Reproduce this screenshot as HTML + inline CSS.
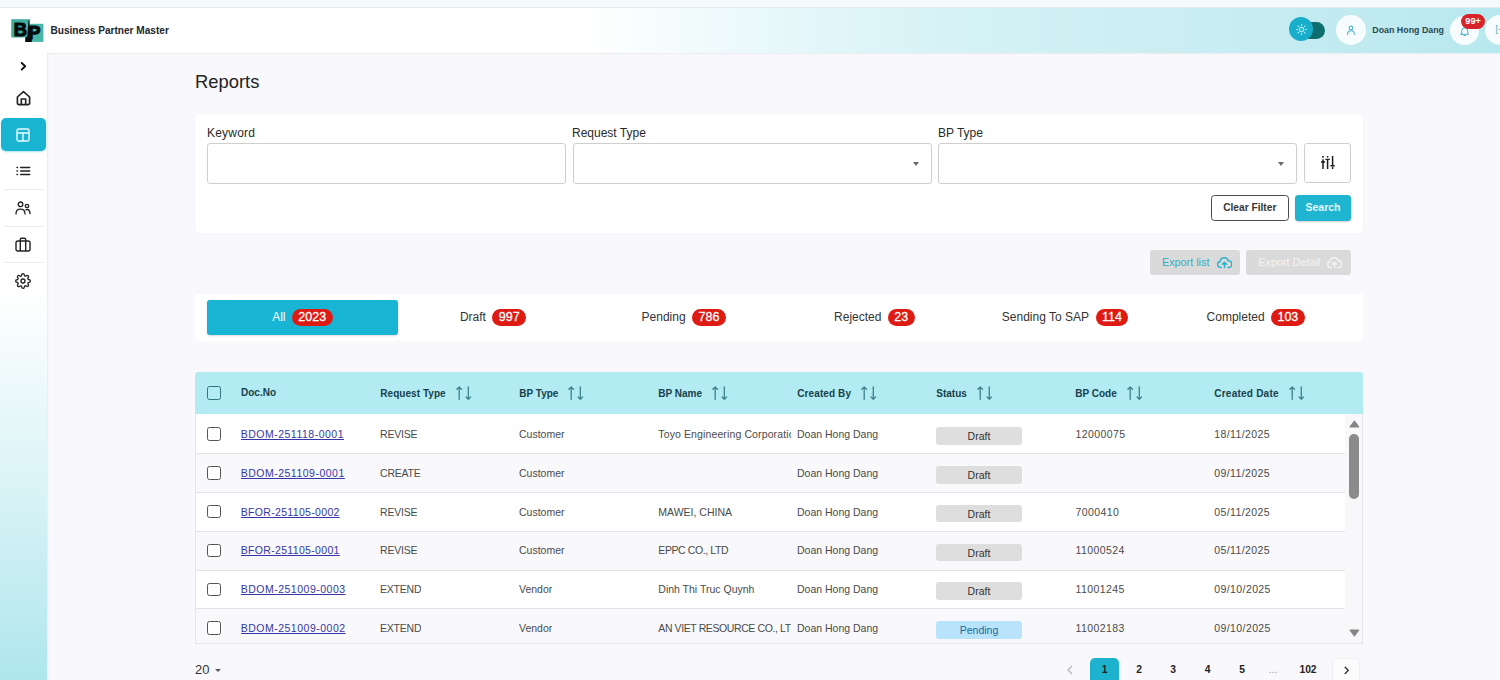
<!DOCTYPE html>
<html lang="en">
<head>
<meta charset="utf-8">
<title>Business Partner Master - Reports</title>
<style>
*{box-sizing:border-box;margin:0;padding:0}
html,body{width:1500px;height:680px;overflow:hidden}
body{font-family:"Liberation Sans",sans-serif;color:#2b2b2b;background:#f9f9fd;position:relative;font-size:11px}
.abs{position:absolute}
#topstrip{left:0;top:0;width:1500px;height:8px;background:#f4f9fa;border-bottom:1px solid #e4eaec}
#header{left:0;top:8px;width:1500px;height:45px;background:linear-gradient(90deg,#ffffff 0%,#ffffff 39%,#f2fbfc 46%,#e2f6f9 55%,#d6f2f6 63%,#c5ecf1 85%,#b8e8ef 100%)}
#sidebar{left:0;top:53px;width:47px;height:627px;background:linear-gradient(180deg,#ffffff 0%,#ffffff 38%,#d9f3f6 70%,#aee6ed 100%)}
#main{left:47px;top:53px;width:1453px;height:627px;background:#f9f9fd;box-shadow:inset 1px 1px 2px rgba(0,0,0,.06)}
.logo{left:11px;top:19px;width:33px;height:23px}
.brand{left:50.5px;top:25px;font-size:10.1px;font-weight:bold;color:#23262d;letter-spacing:0}
.title{left:195px;top:70.500px;font-size:18.400px;color:#222}
.card{background:#fff;border-radius:4px}
.lbl{font-size:12px;color:#2a2a2a}
.inp{background:#fff;border:1px solid #cfcfcf;border-radius:3px;height:41px}
.caret{width:0;height:0;border-left:3.500px solid transparent;border-right:3.500px solid transparent;border-top:4px solid #6a6a6a}
.btn{border-radius:3px;font-size:10.5px;text-align:center;height:25px;line-height:23px}
.tab{margin-top:1px;font-size:12px;color:#333;white-space:nowrap}
.badge{display:inline-block;background:#de1b13;color:#fff;-webkit-text-stroke:0.300px #fff;border-radius:9px;height:17.500px;line-height:17.500px;padding:0 6.400px;font-size:12.500px;margin-left:6.500px;vertical-align:middle;position:relative;top:-0.500px}
.th{font-size:10px;font-weight:bold;color:#17414c;white-space:nowrap;top:387px}
.th svg{vertical-align:middle;margin-left:10px;position:relative;top:-1.500px}
.rowc{left:195px;width:1150px;height:39px}
.cell{position:absolute;top:0;line-height:38px;height:38px;font-size:10.500px;color:#4a4a4a;white-space:nowrap;overflow:hidden}
.cell.lk{letter-spacing:0.500px}
.cell.up{letter-spacing:-0.200px}
.cell.num{letter-spacing:0.400px}
.cell a{color:#3636a6;text-decoration:underline}
.cb{position:absolute;left:12.300px;top:12.400px;width:13.700px;height:13.500px;border:1.500px solid #555;border-radius:2.500px;background:#fff}
.st{position:absolute;left:741px;top:12.200px;width:86px;height:17.700px;border-radius:3px;font-size:10.500px;text-align:center;line-height:18.500px;background:#dedede;color:#333}
.st.p{background:#b9e3fa;color:#1a6a9a}
.pg{font-size:10.300px;font-weight:bold;color:#333;top:664px;width:30px;text-align:center}
</style>
</head>
<body>
<div id="topstrip" class="abs"></div>
<div id="header" class="abs"></div>
<div id="sidebar" class="abs"></div>
<div id="main" class="abs"></div>

<!-- logo -->
<svg class="abs logo" viewBox="0 0 33 23">
  <rect x="0.2" y="0.2" width="18.3" height="18.3" fill="#3fae9f"/>
  <rect x="14.3" y="4.800" width="18.1" height="18.1" fill="#46b6a7"/>
  <polygon points="18.500,0.200 18.500,7 20.800,7 20.800,22.900 14.300,22.900 14.300,18.800 16.300,17 17.100,6 17.500,2" fill="#070d0c"/>
  <text x="2.800" y="17.200" font-family="Liberation Sans, sans-serif" font-weight="bold" font-size="18.300" fill="#070d0c" stroke="#070d0c" stroke-width="1.200" stroke-linejoin="round">B</text>
  <text x="17.200" y="19.700" font-family="Liberation Sans, sans-serif" font-weight="bold" font-size="18.300" fill="#070d0c" stroke="#070d0c" stroke-width="1.200" stroke-linejoin="round">P</text>
</svg>
<div class="abs brand">Business Partner Master</div>

<div class="abs title">Reports</div>

<!-- header right -->
<div class="abs" style="left:1296px;top:22px;width:29px;height:17px;border-radius:8.500px;background:#0f6d70"></div>
<div class="abs" style="left:1289px;top:17.300px;width:24px;height:24px;border-radius:12px;background:#18aeca"></div>
<svg class="abs" style="left:1294.500px;top:23.200px" width="13" height="13" viewBox="0 0 16 16" fill="none" stroke="#9fe9f3" stroke-width="1.400" stroke-linecap="round"><circle cx="8" cy="8" r="2.6"/><path d="M8 1.6v1.6M8 12.8v1.6M1.6 8h1.6M12.8 8h1.6M3.5 3.5l1.1 1.1M11.4 11.4l1.1 1.1M3.5 12.5l1.1-1.1M11.4 4.6l1.1-1.1"/></svg>
<div class="abs" style="left:1336px;top:15px;width:30px;height:30px;border-radius:15px;background:#f7fdfe"></div>
<svg class="abs" style="left:1346.300px;top:25px" width="10" height="10" viewBox="0 0 10 10" fill="none" stroke="#4fb3c3" stroke-width="1.100" stroke-linecap="round"><circle cx="5" cy="3" r="1.900"/><path d="M1.600 9.400c0-2.400 1.500-3.700 3.400-3.700s3.400 1.300 3.400 3.700"/></svg>
<div class="abs" style="left:1372.300px;top:24.500px;font-size:8.850px;font-weight:bold;color:#2b4850;white-space:nowrap">Doan Hong Dang</div>
<div class="abs" style="left:1450px;top:16px;width:29px;height:29px;border-radius:14.500px;background:#f7fdfe"></div>
<svg class="abs" style="left:1460px;top:25.500px" width="9.500" height="10.300" viewBox="0 0 12 13" fill="none" stroke="#2aa7bd" stroke-width="1.1" stroke-linecap="round" stroke-linejoin="round"><path d="M2.2 9.5V6a3.8 3.8 0 0 1 7.6 0v3.5l1 1H1.2z"/><path d="M5 12h2"/></svg>
<div class="abs" style="left:1461px;top:13.800px;width:24.300px;height:15px;border-radius:7.500px;background:#d8232a;color:#fff;font-size:9.300px;font-weight:bold;line-height:15px;text-align:center">99+</div>
<div class="abs" style="left:1485.300px;top:15.300px;width:29.500px;height:29.500px;border-radius:15px;background:#f7fdfe"></div>
<div class="abs" style="left:1495.500px;top:24px;font-size:9px;color:#4aa8b8">[-</div>


<!-- sidebar -->
<svg class="abs" style="left:18px;top:61px" width="10" height="10" viewBox="0 0 10 10" fill="none" stroke="#111" stroke-width="1.900" stroke-linecap="round" stroke-linejoin="round"><path d="M3.700 2L7.200 5.300 3.700 8.600"/></svg>
<svg class="abs" style="left:16px;top:90px" width="15" height="16" viewBox="0 0 15 16" fill="none" stroke="#222" stroke-width="1.650" stroke-linejoin="round"><path d="M1.400 7L7.500 1.700l6.100 5.300v6.100a1.500 1.500 0 0 1-1.500 1.500H2.900a1.500 1.500 0 0 1-1.500-1.500z"/><path d="M5.300 14.500V9h4.400v5.500"/></svg>
<div class="abs" style="left:1px;top:117.600px;width:45px;height:33.500px;border-radius:5px;background:#19b4d1;box-shadow:0 1px 2px rgba(25,180,209,.35)"></div>
<svg class="abs" style="left:16px;top:128px" width="14" height="14" viewBox="0 0 14 14" fill="none" stroke="#e9fbff" stroke-width="1.4" stroke-linejoin="round"><rect x="1" y="1" width="12" height="12" rx="1.6"/><path d="M1 5h12M7 5v8"/></svg>
<svg class="abs" style="left:15px;top:165px" width="16" height="12" viewBox="0 0 16 12" fill="none" stroke="#222" stroke-width="1.5" stroke-linecap="round"><path d="M5.700 2.400h9M5.700 6h9M5.700 9.600h9"/><path d="M2 2.400h.5M2 6h.5M2 9.600h.5"/></svg>
<div class="abs" style="left:4px;top:189px;width:39px;height:1px;background:#ebebed"></div>
<svg class="abs" style="left:15px;top:201px" width="16" height="14" viewBox="0 0 16 14" fill="none" stroke="#222" stroke-width="1.3" stroke-linecap="round"><circle cx="5.500" cy="3.300" r="2.300"/><circle cx="12" cy="5" r="1.700"/><path d="M1 13c0-3 2-4.800 4.500-4.800S10 10 10 13"/><path d="M10.800 8.800c.4-.2.800-.3 1.200-.3 1.800 0 3 1.600 3 4.200"/></svg>
<div class="abs" style="left:4px;top:226px;width:39px;height:1px;background:#ebebed"></div>
<svg class="abs" style="left:15px;top:237px" width="16" height="15" viewBox="0 0 16 15" fill="none" stroke="#222" stroke-width="1.4" stroke-linejoin="round"><rect x="1" y="4" width="14" height="10" rx="1.800"/><path d="M5.300 14V2.400a1.200 1.200 0 0 1 1.200-1.200h3a1.200 1.200 0 0 1 1.200 1.200V14"/></svg>
<div class="abs" style="left:4px;top:262px;width:39px;height:1px;background:#ebebed"></div>
<svg class="abs" style="left:15px;top:273px" width="16" height="16" viewBox="0 0 24 24" fill="none" stroke="#222" stroke-width="2" stroke-linecap="round" stroke-linejoin="round"><circle cx="12" cy="12" r="3"/><path d="M19.4 15a1.650 1.650 0 0 0 .33 1.820l.06.06a2 2 0 1 1-2.830 2.830l-.06-.06a1.650 1.650 0 0 0-1.820-.33 1.650 1.650 0 0 0-1 1.510V21a2 2 0 0 1-4 0v-.09A1.650 1.650 0 0 0 9 19.400a1.650 1.650 0 0 0-1.820.33l-.06.06a2 2 0 1 1-2.830-2.830l.06-.06a1.650 1.650 0 0 0 .33-1.820 1.650 1.650 0 0 0-1.510-1H3a2 2 0 0 1 0-4h.09A1.650 1.650 0 0 0 4.600 9a1.650 1.650 0 0 0-.33-1.820l-.06-.06a2 2 0 1 1 2.830-2.830l.06.06a1.650 1.650 0 0 0 1.820.33H9a1.650 1.650 0 0 0 1-1.510V3a2 2 0 0 1 4 0v.09a1.650 1.650 0 0 0 1 1.510 1.650 1.650 0 0 0 1.820-.33l.06-.06a2 2 0 1 1 2.830 2.830l-.06.06a1.650 1.650 0 0 0-.33 1.820V9a1.650 1.650 0 0 0 1.510 1H21a2 2 0 0 1 0 4h-.09a1.650 1.650 0 0 0-1.510 1z"/></svg>


<!-- filter card -->
<div class="abs card" style="left:195px;top:114px;width:1168px;height:119px;box-shadow:0 0 2px rgba(0,0,0,.06)"></div>
<div class="abs lbl" style="left:207px;top:126px;letter-spacing:0.200px">Keyword</div>
<div class="abs lbl" style="left:572px;top:126px">Request Type</div>
<div class="abs lbl" style="left:938px;top:126px">BP Type</div>
<div class="abs inp" style="left:207px;top:143px;width:359px"></div>
<div class="abs inp" style="left:573px;top:143px;width:359px"></div>
<div class="abs caret" style="left:912.500px;top:162.300px"></div>
<div class="abs inp" style="left:938px;top:143px;width:359px"></div>
<div class="abs caret" style="left:1277.800px;top:162.300px"></div>
<div class="abs inp" style="left:1304px;top:143px;width:47px;height:40px"></div>
<svg class="abs" style="left:1321px;top:156px" width="14" height="13" viewBox="0 0 14 13" fill="none" stroke="#1e1e1e" stroke-width="1.500"><path d="M2 0v1.800M2 3.300v9.700M6.600 0v1.600M6.600 3.300v9.700M11.600 0v9.500M11.600 10.800v2.200"/><path d="M0 6h4.100M4.400 3.400h4.400M9.400 9.700h4.400" stroke-width="1.400"/></svg>
<div class="abs btn" style="left:1211px;top:195.300px;width:77.500px;height:26px;line-height:24px;border:1px solid #4a4a4a;border-radius:3.500px;background:#fff;color:#363636;font-weight:bold;font-size:10.200px">Clear Filter</div>
<div class="abs btn" style="left:1295px;top:195.300px;width:56px;height:26px;background:#1fb5d1;color:#e6f8fb;font-weight:bold;line-height:25px;border-radius:3.500px;box-shadow:0 1px 2px rgba(0,0,0,.2)">Search</div>

<div class="abs btn" style="left:1150px;top:250.400px;width:90.400px;background:#dadada;color:#2ab0c8;text-align:left;padding-left:12px;line-height:25px;font-size:10.800px">Export list</div>
<svg class="abs" style="left:1217px;top:256px" width="15" height="13" viewBox="0 0 15 13" fill="none" stroke="#2ab0c8" stroke-width="1.500" stroke-linecap="round" stroke-linejoin="round"><path d="M4 11.500h-.5a3 3 0 0 1-.4-5.950A4.200 4.200 0 0 1 11.300 4.700 3.300 3.300 0 0 1 11.500 11.500H11"/><path d="M7.500 11.500V6.500M5.500 8.300l2-2 2 2"/></svg>
<div class="abs btn" style="left:1246.400px;top:250.400px;width:104.800px;background:#dadada;color:#f4f4f4;text-align:left;padding-left:12px;line-height:25px;font-size:10.800px">Export Detail</div>
<svg class="abs" style="left:1327px;top:256px" width="15" height="13" viewBox="0 0 15 13" fill="none" stroke="#f4f4f4" stroke-width="1.500" stroke-linecap="round" stroke-linejoin="round"><path d="M4 11.500h-.5a3 3 0 0 1-.4-5.950A4.200 4.200 0 0 1 11.300 4.700 3.300 3.300 0 0 1 11.500 11.500H11"/><path d="M7.500 11.500V6.500M5.500 8.300l2-2 2 2"/></svg>

<!-- tabs -->
<div class="abs card" style="left:195px;top:294px;width:1168px;height:47px;border-radius:2px"></div>
<div class="abs" style="left:207px;top:300px;width:191px;height:35px;border-radius:3px;background:#17b5d3;box-shadow:0 1px 2px rgba(0,0,0,.15)"></div>
<div class="abs tab" style="left:207.0px;top:308px;width:190.7px;text-align:center;color:#fff">All<span class="badge">2023</span></div>
<div class="abs tab" style="left:397.7px;top:308px;width:190.7px;text-align:center;color:#333">Draft<span class="badge">997</span></div>
<div class="abs tab" style="left:588.3px;top:308px;width:190.7px;text-align:center;color:#333">Pending<span class="badge">786</span></div>
<div class="abs tab" style="left:779.0px;top:308px;width:190.7px;text-align:center;color:#333">Rejected<span class="badge">23</span></div>
<div class="abs tab" style="left:969.7px;top:308px;width:190.7px;text-align:center;color:#333">Sending To SAP<span class="badge">114</span></div>
<div class="abs tab" style="left:1160.3px;top:308px;width:190.7px;text-align:center;color:#333">Completed<span class="badge">103</span></div>
<!-- table -->
<div class="abs" style="left:195px;top:372.400px;width:1168px;height:41.600px;background:#b2ebf2;border-radius:3px 3px 0 0"></div>
<div class="abs" style="left:195px;top:414px;width:1168px;height:230px;background:#fff;border:1px solid #e4e4e9;border-top:none"></div>
<div class="abs" style="left:207.300px;top:386.300px;width:13.600px;height:13.600px;border:1.600px solid #2f7381;border-radius:2.500px"></div>
<div class="abs th" style="left:241px;letter-spacing:0px">Doc.No</div>
<div class="abs th" style="left:380.3px;letter-spacing:0.05px">Request Type<svg width="16" height="14" viewBox="0 0 16 14" fill="none" stroke="#3d7f8c" stroke-width="1.300" stroke-linecap="round" stroke-linejoin="round"><path d="M3.200 13.300V1M0.900 3.200l2.300-2.300 2.300 2.300"/><path d="M12.300 0.800v12.300M10 10.900l2.300 2.300 2.300-2.300"/></svg></div>
<div class="abs th" style="left:519.3px;letter-spacing:0px">BP Type<svg width="16" height="14" viewBox="0 0 16 14" fill="none" stroke="#3d7f8c" stroke-width="1.300" stroke-linecap="round" stroke-linejoin="round"><path d="M3.200 13.300V1M0.900 3.200l2.300-2.300 2.300 2.300"/><path d="M12.300 0.800v12.300M10 10.900l2.300 2.300 2.300-2.300"/></svg></div>
<div class="abs th" style="left:658.3px;letter-spacing:0px">BP Name<svg width="16" height="14" viewBox="0 0 16 14" fill="none" stroke="#3d7f8c" stroke-width="1.300" stroke-linecap="round" stroke-linejoin="round"><path d="M3.200 13.300V1M0.900 3.200l2.300-2.300 2.300 2.300"/><path d="M12.300 0.800v12.300M10 10.900l2.300 2.300 2.300-2.300"/></svg></div>
<div class="abs th" style="left:797.3px;letter-spacing:0.1px">Created By<svg width="16" height="14" viewBox="0 0 16 14" fill="none" stroke="#3d7f8c" stroke-width="1.300" stroke-linecap="round" stroke-linejoin="round"><path d="M3.200 13.300V1M0.900 3.200l2.300-2.300 2.300 2.300"/><path d="M12.300 0.800v12.300M10 10.900l2.300 2.300 2.300-2.300"/></svg></div>
<div class="abs th" style="left:936.3px;letter-spacing:0px">Status<svg width="16" height="14" viewBox="0 0 16 14" fill="none" stroke="#3d7f8c" stroke-width="1.300" stroke-linecap="round" stroke-linejoin="round"><path d="M3.200 13.300V1M0.900 3.200l2.300-2.300 2.300 2.300"/><path d="M12.300 0.800v12.300M10 10.900l2.300 2.300 2.300-2.300"/></svg></div>
<div class="abs th" style="left:1075.3px;letter-spacing:0px">BP Code<svg width="16" height="14" viewBox="0 0 16 14" fill="none" stroke="#3d7f8c" stroke-width="1.300" stroke-linecap="round" stroke-linejoin="round"><path d="M3.200 13.300V1M0.900 3.200l2.300-2.300 2.300 2.300"/><path d="M12.300 0.800v12.300M10 10.900l2.300 2.300 2.300-2.300"/></svg></div>
<div class="abs th" style="left:1214.3px;letter-spacing:0.23px">Created Date<svg width="16" height="14" viewBox="0 0 16 14" fill="none" stroke="#3d7f8c" stroke-width="1.300" stroke-linecap="round" stroke-linejoin="round"><path d="M3.200 13.300V1M0.900 3.200l2.300-2.300 2.300 2.300"/><path d="M12.300 0.800v12.300M10 10.900l2.300 2.300 2.300-2.300"/></svg></div>
<div class="abs" style="left:196px;top:453px;width:1149px;height:1px;background:#e2e2e8"></div>
<div class="abs rowc" style="top:415.0px"><div class="cb"></div><div class="cell lk" style="left:45.700px;letter-spacing:0.5px"><a>BDOM-251118-0001</a></div><div class="cell up" style="left:185px">REVISE</div><div class="cell" style="left:324px">Customer</div><div class="cell" style="left:463.300px;width:132.500px;letter-spacing:0.12px">Toyo Engineering Corporation</div><div class="cell" style="left:602px">Doan Hong Dang</div><div class="st">Draft</div><div class="cell num" style="left:880.500px">12000075</div><div class="cell num" style="left:1019.300px">18/11/2025</div></div>
<div class="abs" style="left:196px;top:454px;width:1149px;height:38px;background:#f9f9fc"></div>
<div class="abs" style="left:196px;top:492px;width:1149px;height:1px;background:#e2e2e8"></div>
<div class="abs rowc" style="top:453.8px"><div class="cb"></div><div class="cell lk" style="left:45.700px;letter-spacing:0.5px"><a>BDOM-251109-0001</a></div><div class="cell up" style="left:185px">CREATE</div><div class="cell" style="left:324px">Customer</div><div class="cell" style="left:463.300px;width:132.500px;letter-spacing:0px"></div><div class="cell" style="left:602px">Doan Hong Dang</div><div class="st">Draft</div><div class="cell num" style="left:880.500px"></div><div class="cell num" style="left:1019.300px">09/11/2025</div></div>
<div class="abs" style="left:196px;top:531px;width:1149px;height:1px;background:#e2e2e8"></div>
<div class="abs rowc" style="top:492.6px"><div class="cb"></div><div class="cell lk" style="left:45.700px;letter-spacing:0.33px"><a>BFOR-251105-0002</a></div><div class="cell up" style="left:185px">REVISE</div><div class="cell" style="left:324px">Customer</div><div class="cell" style="left:463.300px;width:132.500px;letter-spacing:0px">MAWEI, CHINA</div><div class="cell" style="left:602px">Doan Hong Dang</div><div class="st">Draft</div><div class="cell num" style="left:880.500px">7000410</div><div class="cell num" style="left:1019.300px">05/11/2025</div></div>
<div class="abs" style="left:196px;top:532px;width:1149px;height:38px;background:#f9f9fc"></div>
<div class="abs" style="left:196px;top:570px;width:1149px;height:1px;background:#e2e2e8"></div>
<div class="abs rowc" style="top:531.4px"><div class="cb"></div><div class="cell lk" style="left:45.700px;letter-spacing:0.33px"><a>BFOR-251105-0001</a></div><div class="cell up" style="left:185px">REVISE</div><div class="cell" style="left:324px">Customer</div><div class="cell" style="left:463.300px;width:132.500px;letter-spacing:-0.4px">EPPC CO., LTD</div><div class="cell" style="left:602px">Doan Hong Dang</div><div class="st">Draft</div><div class="cell num" style="left:880.500px">11000524</div><div class="cell num" style="left:1019.300px">05/11/2025</div></div>
<div class="abs" style="left:196px;top:608px;width:1149px;height:1px;background:#e2e2e8"></div>
<div class="abs rowc" style="top:570.2px"><div class="cb"></div><div class="cell lk" style="left:45.700px;letter-spacing:0.5px"><a>BDOM-251009-0003</a></div><div class="cell up" style="left:185px">EXTEND</div><div class="cell" style="left:324px">Vendor</div><div class="cell" style="left:463.300px;width:132.500px;letter-spacing:0px">Dinh Thi Truc Quynh</div><div class="cell" style="left:602px">Doan Hong Dang</div><div class="st">Draft</div><div class="cell num" style="left:880.500px">11001245</div><div class="cell num" style="left:1019.300px">09/10/2025</div></div>
<div class="abs" style="left:196px;top:609px;width:1149px;height:34px;background:#f9f9fc"></div>
<div class="abs rowc" style="top:609.0px"><div class="cb"></div><div class="cell lk" style="left:45.700px;letter-spacing:0.5px"><a>BDOM-251009-0002</a></div><div class="cell up" style="left:185px">EXTEND</div><div class="cell" style="left:324px">Vendor</div><div class="cell" style="left:463.300px;width:132.500px;letter-spacing:-0.4px">AN VIET RESOURCE CO., LTD</div><div class="cell" style="left:602px">Doan Hong Dang</div><div class="st p">Pending</div><div class="cell num" style="left:880.500px">11002183</div><div class="cell num" style="left:1019.300px">09/10/2025</div></div>
<div class="abs" style="left:1345px;top:414px;width:17px;height:229px;background:#f8f8fb"></div>
<div class="abs" style="left:1349.300px;top:434px;width:9.700px;height:65px;border-radius:5px;background:#8b8b8b"></div>
<svg class="abs" style="left:1348px;top:419px" width="13" height="9" viewBox="0 0 13 9"><path d="M1.800 8L6.400 1.800 11 8z" fill="#858585" stroke="#858585" stroke-width="1" stroke-linejoin="round"/></svg>
<svg class="abs" style="left:1348px;top:629px" width="13" height="9" viewBox="0 0 13 9"><path d="M1.800 1L6.400 7.200 11 1z" fill="#858585" stroke="#858585" stroke-width="1" stroke-linejoin="round"/></svg>
<!-- pagination -->
<div class="abs" style="left:195px;top:662px;font-size:13px;color:#333">20</div>
<div class="abs caret" style="left:214.800px;top:669.300px;border-left-width:3.300px;border-right-width:3.300px;border-top-width:3.800px;border-top-color:#5a5a5a"></div>
<div class="abs" style="left:1090px;top:658px;width:29px;height:30px;border-radius:5px;background:#1fb2cf"></div>
<div class="abs" style="left:1332px;top:658px;width:28px;height:30px;border-radius:5px;background:#fcfcfd;border:1px solid #efeff3"></div>
<svg class="abs" style="left:1066px;top:665px" width="8" height="10" viewBox="0 0 8 10" fill="none" stroke="#b5b5b5" stroke-width="1.300" stroke-linecap="round" stroke-linejoin="round"><path d="M5.500 1.500L2 5l3.500 3.500"/></svg>
<svg class="abs" style="left:1342.500px;top:666px" width="7" height="8.750" viewBox="0 0 8 10" fill="none" stroke="#2a2a2a" stroke-width="1.600" stroke-linecap="round" stroke-linejoin="round"><path d="M2.500 1.500L6 5 2.500 8.500"/></svg>
<div class="abs pg" style="left:1089.5px;color:#222;font-weight:bold">1</div>
<div class="abs pg" style="left:1124.0px;color:#222;font-weight:bold">2</div>
<div class="abs pg" style="left:1158.0px;color:#222;font-weight:bold">3</div>
<div class="abs pg" style="left:1192.5px;color:#222;font-weight:bold">4</div>
<div class="abs pg" style="left:1227.0px;color:#222;font-weight:bold">5</div>
<div class="abs pg" style="left:1258.0px;color:#999;font-weight:normal">...</div>
<div class="abs pg" style="left:1293.0px;color:#222;font-weight:bold">102</div>
</body>
</html>
